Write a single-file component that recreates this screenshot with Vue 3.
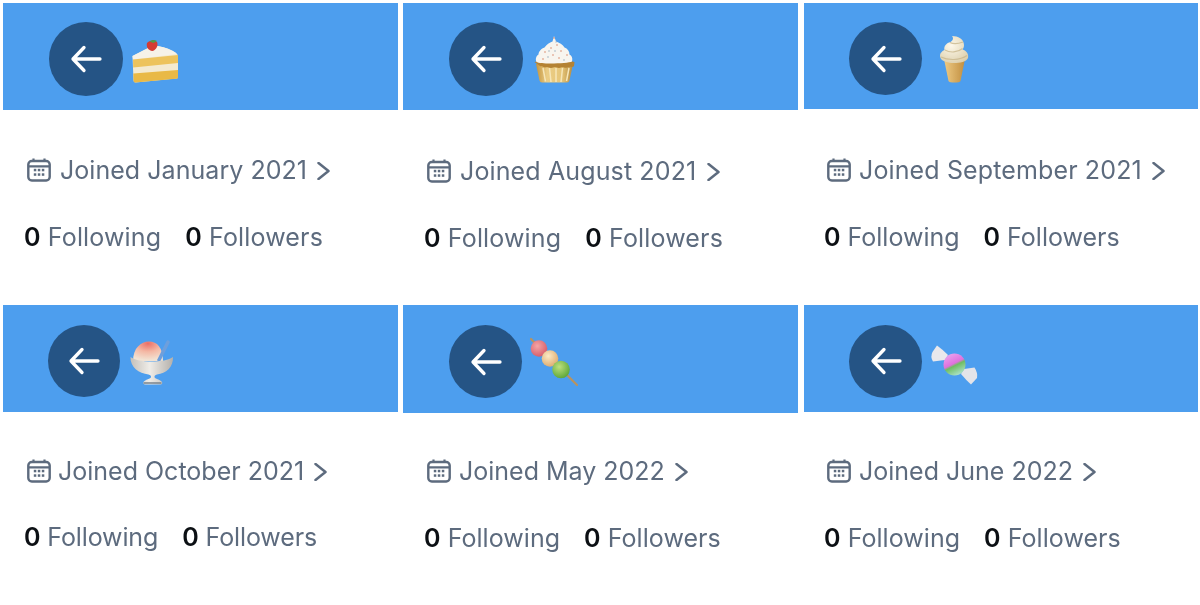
<script setup>
const cards = [
  { id: 'c1', emoji: 'cake', joined: 'Joined January 2021' },
  { id: 'c2', emoji: 'cupcake', joined: 'Joined August 2021' },
  { id: 'c3', emoji: 'icecream', joined: 'Joined September 2021' },
  { id: 'c4', emoji: 'shaved', joined: 'Joined October 2021' },
  { id: 'c5', emoji: 'dango', joined: 'Joined May 2022' },
  { id: 'c6', emoji: 'candy', joined: 'Joined June 2022' }
]
</script>

<template>
  <div class="page">
    <section v-for="c in cards" :key="c.id" class="card" :class="c.id">
      <header class="banner">
        <button class="back" aria-label="Back">
          <svg viewBox="0 0 32 28" class="arrow"><path d="M30 14H3M14 2.500 3 14l11 11.500" fill="none" stroke="#fff" stroke-width="3.300" stroke-linecap="round" stroke-linejoin="round"/></svg>
        </button>
        <svg class="emoji" viewBox="0 0 48 48" role="img">
          <defs>
            <linearGradient id="cup" x1="0" x2="1" y1="0" y2="0"><stop offset="0" stop-color="#c29440"/><stop offset=".3" stop-color="#ebcd85"/><stop offset=".7" stop-color="#e6c679"/><stop offset="1" stop-color="#b58a3e"/></linearGradient>
            <linearGradient id="cone" x1="0" x2="1" y1="0" y2="0"><stop offset="0" stop-color="#eecb85"/><stop offset="1" stop-color="#c18e3f"/></linearGradient>
            <radialGradient id="swirl" cx=".4" cy=".35" r=".8"><stop offset="0" stop-color="#fdf8ea"/><stop offset="1" stop-color="#d9cba6"/></radialGradient>
            <radialGradient id="ice" cx=".5" cy=".1" r=".85"><stop offset="0" stop-color="#ec6f66"/><stop offset=".5" stop-color="#f4b8a4"/><stop offset="1" stop-color="#f2e2d2"/></radialGradient>
            <linearGradient id="glass" x1="0" x2="1" y1="0" y2="0"><stop offset="0" stop-color="#c4c0ba"/><stop offset=".45" stop-color="#efece7"/><stop offset="1" stop-color="#b4b0ab"/></linearGradient>
            <radialGradient id="d1" cx=".4" cy=".35" r=".7"><stop offset="0" stop-color="#f4a5a5"/><stop offset="1" stop-color="#d55a68"/></radialGradient>
            <radialGradient id="d2" cx=".4" cy=".35" r=".7"><stop offset="0" stop-color="#fbeac5"/><stop offset="1" stop-color="#dca96c"/></radialGradient>
            <radialGradient id="d3" cx=".4" cy=".35" r=".7"><stop offset="0" stop-color="#bde07e"/><stop offset="1" stop-color="#5aa536"/></radialGradient>
            <linearGradient id="sweet" x1=".25" x2=".75" y1="0" y2="1"><stop offset="0" stop-color="#e9a4ee"/><stop offset=".45" stop-color="#e070dd"/><stop offset=".55" stop-color="#6fbd62"/><stop offset="1" stop-color="#b4e6d4"/></linearGradient>
          </defs>
          <g v-if="c.emoji === 'cake'">
            <path d="M1.500 21 22 10.500c9 .500 19 4 24 8.500 1 1 1 2 1 3v20c0 1-1 1.500-2 1.500L4.500 47.500c-1.500 0-2-1-2-2.500Z" fill="#f4ead0"/>
            <path d="M1.500 21 22 10.500c9 .500 19 4 24 8.500L2 24.500Z" fill="#f6f2e8"/>
            <path d="M2 24.500 47 20v8L2.200 32.500Z" fill="#edc35c"/>
            <path d="M2.300 38.500 47 35v7.500c0 1-1 1.200-2 1.300L4.500 47.500c-1.500 0-2-1-2-2.500Z" fill="#e9b946"/>
            <path d="M16 8c2-3 8-3.500 10-1 1.500 3-.5 8-4.500 9-4.500-.500-6.500-4-5.500-8Z" fill="#d43b33"/>
            <path d="M18.500 6.500c2-1.500 5-2 7.500-.5l-3.500 2Z" fill="#4f9a4a"/>
          </g>
          <g v-else-if="c.emoji === 'cupcake'">
            <path d="M5 29h37l-3.500 16.500a2.500 2.500 0 0 1-2.500 2H11a2.500 2.500 0 0 1-2.500-2Z" fill="url(#cup)"/>
            <path d="M12 33l2.500 13.500M18.500 33l1.500 14M25 33v14M31.500 33l-1.500 14M38 33l-2.500 13" stroke="#f6e6b8" stroke-width="1.500" fill="none"/>
            <path d="M3.500 27c4-2 36-2 40 0l-.5 4c-1 1.500-3 .5-5 1s-3 1-5 .5-3 .5-5 .5-3.500-1-5.500-.5-3 .5-5 0-4 .5-5-.5-3-.5-3.500-1Z" fill="#b48233"/>
            <path d="M5.500 27c-1.500-3 0-6.500 2-7.500 0-3 3-6 6-7 2-3 5-5 8-6l1.500-5.500 2 5.500c3 1 7 3 8.500 6 3 1 5 4 5 7 2 1 3.500 3.500 2.500 7-4 2-31 3-35.500.500Z" fill="#f8f5ef"/>
            <g fill="#d98a6c"><circle cx="14" cy="17" r=".8"/><circle cx="20" cy="13" r=".8"/><circle cx="26" cy="10" r=".8"/><circle cx="30" cy="16" r=".8"/><circle cx="36" cy="20" r=".8"/><circle cx="22" cy="20" r=".8"/><circle cx="12" cy="24" r=".8"/><circle cx="28" cy="23" r=".8"/><circle cx="23" cy="3" r=".8"/></g>
            <g fill="#8ea6b8"><circle cx="17" cy="22" r=".7"/><circle cx="24" cy="16" r=".7"/><circle cx="33" cy="25" r=".7"/><circle cx="18" cy="16" r=".7"/><circle cx="25" cy="7" r=".6"/></g>
          </g>
          <g v-else-if="c.emoji === 'icecream'">
            <path d="M14 24h21l-4.500 22c-.5 2-11.500 2-12 0Z" fill="url(#cone)"/>
            <path d="M10.500 23c-1.500-4 1-6.500 4-8-1-4 2-7 6-8 3-2 3-4 1.500-6 6 0 12 3 12 9 0 2-.5 3-1.500 4.500 4 1 6.500 5 5.500 8.500-1.500 4-8 5-14 5s-12-1.500-13.500-5Z" fill="url(#swirl)"/>
            <path d="M15 15c5 3 13 2.500 17.500-1.500M11 22c7 3.500 19 3.500 26-1.500M20 7.500c3 1.500 9 1 13-.5" stroke="#c7b488" stroke-width="1.100" fill="none" opacity=".75"/>
          </g>
          <g v-else-if="c.emoji === 'shaved'">
            <path d="M5 24C5 11 13 4.500 21 4.500c8 0 14 6 14 19.500Z" fill="url(#ice)"/>
            <path d="M31 23 40 5" stroke="#6d9fdc" stroke-width="3.500" stroke-linecap="round"/>
            <path d="M2.500 20c4 3 12 4.500 21 4.500S41 23 45 20c.5 10-7 16.500-16 17.500-2 .5-2.500 1-2.500 2.500 0 2 6 2.500 7.500 5 .5 1 0 2.500-1.500 2.500H17c-1.500 0-2-1.500-1.500-2.500 1.500-2.500 7.500-3 7.500-5 0-1.500-.5-2-2.500-2.500C11 36.500 2 30 2.500 20Z" fill="url(#glass)"/>
            <path d="M16 46h17" stroke="#78828c" stroke-width="1.400" stroke-linecap="round"/>
          </g>
          <g v-else-if="c.emoji === 'dango'">
            <path d="M1 1 47 47" stroke="#b9935f" stroke-width="2.200" stroke-linecap="round"/>
            <circle cx="9" cy="10.500" r="8.300" fill="url(#d1)"/>
            <circle cx="20" cy="20.500" r="8.300" fill="url(#d2)"/>
            <circle cx="31" cy="31.500" r="8.800" fill="url(#d3)"/>
          </g>
          <g v-else>
            <path d="M15 23 3 24.500Q0 20 2.500 15L7 8.500Q12 12 18 18Z" fill="#e9e8ec"/>
            <path d="M34 32 44.500 30.500Q48 36 47 41L41 47.500Q36 43 31 37Z" fill="#e4e4e9"/>
            <circle cx="24.500" cy="27.500" r="11" fill="url(#sweet)"/>
          </g>
        </svg>
      </header>
      <div class="info">
        <div class="joined">
          <svg class="cal" viewBox="0 0 24 24"><rect x="1.300" y="3" width="21.400" height="19.500" rx="3.500" fill="none" stroke="#5d6b7e" stroke-width="2.400"/><path d="M1.500 8.300h21M6.500 .5V4M17.500 .5V4" stroke="#5d6b7e" stroke-width="2.200" fill="none"/><g fill="#5d6b7e"><rect x="6.800" y="10.800" width="2.500" height="2.500"/><rect x="10.800" y="10.800" width="2.500" height="2.500"/><rect x="14.800" y="10.800" width="2.500" height="2.500"/><rect x="6.800" y="15.300" width="2.500" height="2.500"/><rect x="10.800" y="15.300" width="2.500" height="2.500"/><rect x="14.800" y="15.300" width="2.500" height="2.500"/></g></svg>
          <span class="jtext">{{ c.joined }}</span>
          <svg class="chev" viewBox="0 0 13 18"><path d="M1.500 1 11.500 9 1.500 17" fill="none" stroke="#5d6b7e" stroke-width="2.500" stroke-linecap="round" stroke-linejoin="round"/></svg>
        </div>
        <div class="stats">
          <span class="stat"><b>0</b> Following</span>
          <span class="stat"><b>0</b> Followers</span>
        </div>
      </div>
    </section>
  </div>
</template>

<style scoped>
.page {
  width: 1200px;
  height: 605px;
  overflow: hidden;
  background: #fff;
  display: grid;
  grid-template-columns: repeat(3, 400px);
  grid-template-rows: 300px 305px;
  font-family: Inter, "Liberation Sans", sans-serif;
  filter: blur(0.45px);
}
.card { --ml: 3px; --mt: 3px; --w: 395px; --h: 107px; --pl: 46px; --d: 74px; --ls: .04px; --sls: .15px; --ix: 24px; --jt: 45px; --st: 37px; --gap: 24px; --jgap: 9px; --cgap: 10px; }
.c2 { --jt: 46px; --ls: .13px; --cgap: 11px; }
.c3 { --ml: 4px; --w: 394px; --h: 106px; --pl: 45px; --d: 73px; --jt: 46px; --ls: .13px; --sls: 0px; --jgap: 8px; }
.c4 { --mt: 5px; --pl: 45px; --d: 72px; --jt: 44px; --st: 36px; --ls: 0px; --sls: -.12px; --jgap: 7px; --gap: 24px; }
.c5 { --mt: 5px; --h: 108px; --pl: 46px; --d: 73px; --jt: 43px; --ls: 0px; --sls: .05px; --jgap: 8px; }
.c6 { --ml: 4px; --w: 394px; --mt: 5px; --pl: 45px; --d: 73px; --jt: 44px; --ls: 0px; --sls: .05px; --jgap: 8px; }
.banner {
  margin: var(--mt) 0 0 var(--ml);
  width: var(--w);
  height: var(--h);
  background: #4d9eee;
  display: flex;
  align-items: center;
  padding-left: var(--pl);
  box-sizing: border-box;
  gap: 8px;
}
.back {
  width: var(--d);
  height: var(--d);
  border: 0;
  padding: 0;
  border-radius: 50%;
  background: #255485;
  display: flex;
  align-items: center;
  justify-content: center;
  margin-top: 5px;
}
.arrow { width: 32px; height: 28px; }
.emoji { width: 48px; height: 48px; margin-top: 5px; overflow: visible; }
.info { padding-left: var(--ix); color: #5d6b7e; font-size: 25px; line-height: 30px; letter-spacing: var(--ls); }
.joined { display: flex; align-items: center; margin-top: var(--jt); padding-left: 3px; }
.cal { width: 24px; height: 24px; margin-right: var(--jgap); }
.jtext { white-space: nowrap; }
.chev { width: 13px; height: 18px; margin-left: var(--cgap); margin-top: 2px; }
.stats { display: flex; gap: var(--gap); margin-top: var(--st); letter-spacing: var(--sls); }
.stat { white-space: nowrap; }
.stat b { color: #0c1014; font-weight: 600; }
</style>
